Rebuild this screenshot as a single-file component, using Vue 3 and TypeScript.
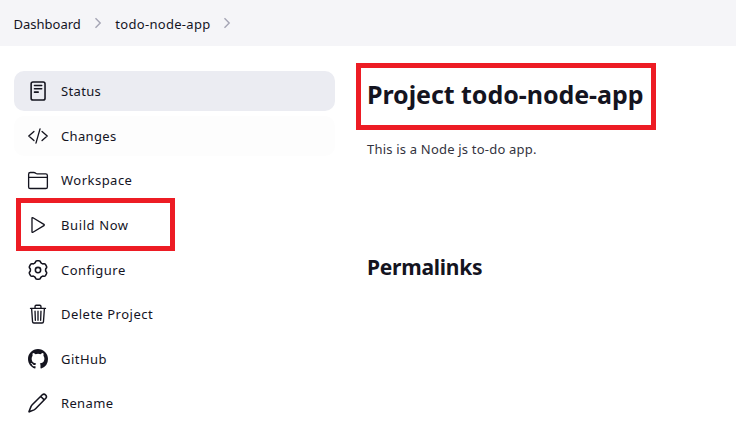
<script setup lang="ts">
interface Task {
  id: string
  label: string
  state?: 'active' | 'hover'
  marked?: boolean
}

const crumbs: string[] = ['Dashboard', 'todo-node-app']

const tasks: Task[] = [
  { id: 'status', label: 'Status', state: 'active' },
  { id: 'changes', label: 'Changes', state: 'hover' },
  { id: 'workspace', label: 'Workspace' },
  { id: 'build', label: 'Build Now', marked: true },
  { id: 'configure', label: 'Configure' },
  { id: 'delete', label: 'Delete Project' },
  { id: 'github', label: 'GitHub' },
  { id: 'rename', label: 'Rename' },
]

// Six-lobed cog outline, sampled around the centre of a 512 unit box.
const gearPath: string =
  'M' +
  Array.from({ length: 120 }, (_, i) => {
    const angle = (i / 120) * Math.PI * 2
    const radius = 215 + 22 * Math.tanh(-2.2 * Math.cos(6 * angle) + 0.6)
    return `${(256 + radius * Math.cos(angle)).toFixed(1)} ${(256 + radius * Math.sin(angle)).toFixed(1)}`
  }).join('L') +
  'Z'
</script>

<template>
  <div class="page">
    <nav class="breadcrumbs">
      <template v-for="crumb in crumbs" :key="crumb">
        <a class="crumb">{{ crumb }}</a>
        <svg class="chevron" viewBox="0 0 8 12"><path d="M1.5 1.2 6.2 6 1.5 10.8" /></svg>
      </template>
    </nav>
    <div class="body">
      <aside class="tasks">
        <a v-for="task in tasks" :key="task.id" class="task" :class="[task.state, task.id]">
          <svg class="icon" viewBox="0 0 512 512">
            <template v-if="task.id === 'status'">
              <rect class="bold" x="80" y="26" width="356" height="462" rx="48" />
              <path class="bold" d="M166 115h184M166 198h184M166 285h95" />
            </template>
            <path v-else-if="task.id === 'changes'" d="M152 138 20 256l132 118M360 138l132 118-132 118M308 72 204 440" />
            <path v-else-if="task.id === 'workspace'" d="M16 180V108q0-44 44-44h92q18 0 31 10l24 16q12 8 28 8h217q44 0 44 44v292q0 40-40 40H56q-40 0-40-40zM16 188h480" />
            <path v-else-if="task.id === 'build'" d="M102 86v340q0 28 25 15l280-168q20-17 0-34L127 71q-25-13-25 15z" />
            <template v-else-if="task.id === 'configure'">
              <circle class="bold" cx="256" cy="256" r="68" />
              <path class="bold" :d="gearPath" />
            </template>
            <path v-else-if="task.id === 'delete'" d="M92 112l24 340q2 34 34 34h212q32 0 34-34l24-340M64 112h384M180 112V62q0-30 30-30h92q30 0 30 30v50M256 184v232M180 184l8 232M332 184l-8 232" />
            <path v-else-if="task.id === 'github'" class="filled" transform="scale(32)" d="M8 0C3.58 0 0 3.58 0 8c0 3.54 2.29 6.53 5.47 7.59.4.07.55-.17.55-.38 0-.19-.01-.82-.01-1.49-2.01.37-2.53-.49-2.69-.94-.09-.23-.48-.94-.82-1.13-.28-.15-.68-.52-.01-.53.63-.01 1.08.58 1.23.82.72 1.21 1.87.87 2.33.66.07-.52.28-.87.51-1.07-1.78-.2-3.64-.89-3.64-3.95 0-.87.31-1.59.82-2.15-.08-.2-.36-1.02.08-2.12 0 0 .67-.21 2.2.82a7.66 7.66 0 0 1 4 0c1.53-1.04 2.2-.82 2.2-.82.44 1.1.16 1.92.08 2.12.51.56.82 1.27.82 2.15 0 3.07-1.87 3.75-3.65 3.95.29.25.54.73.54 1.48 0 1.07-.01 1.93-.01 2.2 0 .21.15.46.55.38A8.01 8.01 0 0 0 16 8c0-4.42-3.58-8-8-8z" />
            <path v-else class="bold" d="M366 46q44-38 86 4 40 42 4 86L200 396q-20 22-46 36L34 482q-12 4-8-10L76 348q12-26 32-46zM328 88l88 88" />
          </svg>
          <span class="label">{{ task.label }}</span>
          <span v-if="task.marked" class="marker"></span>
        </a>
      </aside>
      <main class="content">
        <h1><span class="title">Project todo-node-app</span></h1>
        <p>This is a Node js to-do app.</p>
        <h2>Permalinks</h2>
      </main>
    </div>
  </div>
</template>

<style>
body {
  background: #fff;
}
</style>

<style scoped>
.page {
  height: 438px;
  overflow: hidden;
  color: #14141f;
  font-family: "Noto Sans", "Open Sans", sans-serif;
}
.breadcrumbs {
  display: flex;
  align-items: center;
  height: 46px;
  box-sizing: border-box;
  padding: 1px 0 0 13.5px;
  background: #f5f5f8;
}
.crumb {
  font-size: 13px;
  line-height: 20px;
  white-space: nowrap;
}
.crumb:nth-of-type(2) {
  letter-spacing: 0.3px;
}
.chevron {
  width: 8px;
  height: 12px;
  margin: -2px 13px 0 13.5px;
  fill: none;
  stroke: #a5a5b5;
  stroke-width: 1.4;
}
.crumb:nth-of-type(2) + .chevron {
  margin-left: 12.5px;
}
.body {
  display: grid;
  grid-template-columns: 321px 1fr;
  column-gap: 21px;
  padding-left: 14px;
}
.tasks {
  display: flex;
  flex-direction: column;
  gap: 4.65px;
  padding-top: 25px;
}
.task {
  position: relative;
  display: flex;
  align-items: center;
  gap: 13px;
  height: 40px;
  padding-left: 14px;
  border-radius: 10px;
}
.active {
  background: #ebecf2;
}
.hover {
  background: #fdfdfd;
}
.icon {
  width: 20px;
  height: 20px;
  overflow: visible;
  fill: none;
  stroke: #14141f;
  stroke-width: 34;
  stroke-linecap: round;
  stroke-linejoin: round;
}
.bold {
  stroke-width: 40;
}
.filled {
  fill: #14141f;
  stroke: none;
}
.label {
  font-size: 13px;
  line-height: 20px;
  letter-spacing: 0.35px;
  white-space: nowrap;
}
.workspace .label,
.configure .label,
.delete .label,
.github .label {
  letter-spacing: 0.48px;
}
.build .label {
  letter-spacing: 0.6px;
}
.marker {
  position: absolute;
  left: 2px;
  top: -7px;
  width: 159px;
  height: 53px;
  box-sizing: border-box;
  border: 5px solid #ed1c24;
}
.content {
  padding-top: 17px;
}
h1 {
  display: flex;
  align-items: center;
  width: 300px;
  height: 67px;
  margin: 0;
  padding: 0 0 5px 6px;
  box-sizing: border-box;
  border: 5px solid #ed1c24;
  font-size: 25px;
  line-height: 32px;
  font-weight: 700;
  letter-spacing: -0.05px;
  white-space: nowrap;
}
p {
  margin: 9px 0 0 11px;
  font-size: 13px;
  line-height: 20px;
  letter-spacing: 0.2px;
  color: #333340;
}
h2 {
  margin: 93px 0 0 11px;
  font-size: 21px;
  line-height: 30px;
  font-weight: 700;
  letter-spacing: -0.25px;
}
</style>
